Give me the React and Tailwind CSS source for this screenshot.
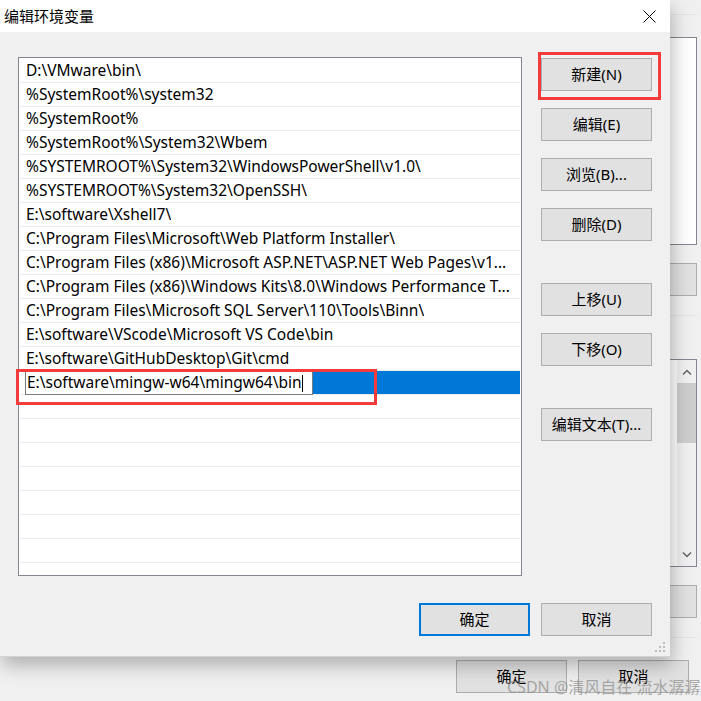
const paths = [
  'D:\\VMware\\bin\\',
  '%SystemRoot%\\system32',
  '%SystemRoot%',
  '%SystemRoot%\\System32\\Wbem',
  '%SYSTEMROOT%\\System32\\WindowsPowerShell\\v1.0\\',
  '%SYSTEMROOT%\\System32\\OpenSSH\\',
  'E:\\software\\Xshell7\\',
  'C:\\Program Files\\Microsoft\\Web Platform Installer\\',
  'C:\\Program Files (x86)\\Microsoft ASP.NET\\ASP.NET Web Pages\\v1...',
  'C:\\Program Files (x86)\\Windows Kits\\8.0\\Windows Performance T...',
  'C:\\Program Files\\Microsoft SQL Server\\110\\Tools\\Binn\\',
  'E:\\software\\VScode\\Microsoft VS Code\\bin',
  'E:\\software\\GitHubDesktop\\Git\\cmd',
]

const editing = 'E:\\software\\mingw-w64\\mingw64\\bin'

function Btn({ children, primary }) {
  return (
    <div
      className={`w-[111px] h-[33px] flex items-center justify-center bg-[#e1e1e1] text-[15px] text-black ${
        primary ? 'border-2 border-[#0078d7]' : 'border border-[#adadad]'
      }`}
    >
      {children}
    </div>
  )
}

const BgWindow = () => (
  <div className="absolute left-[300px] top-0 w-[401px] h-[701px] flex flex-col items-end pr-[4px]">
    <div className="w-full h-[15px] border-b border-[#e3e3e3]"></div>
    <div className="mt-[22px] w-[200px] h-[208px] border border-[#828790] bg-white"></div>
    <div className="mt-[18px] w-[100px] h-[33px] bg-[#e1e1e1] border border-[#adadad]"></div>
    <div className="mt-[19px] w-full border-t border-[#e3e3e3]"></div>
    <div className="mt-[43px] w-[200px] h-[208px] border border-[#828790] bg-white flex justify-end">
      <div className="w-[19px] bg-[#f0f0f0] flex flex-col items-center">
        <div className="h-[23px] flex items-center">
          <svg width="10" height="6" viewBox="0 0 10 6" fill="none" stroke="#606060" strokeWidth="1.4">
            <path d="M1 5.5L5 1.5L9 5.5" />
          </svg>
        </div>
        <div className="w-full h-[60px] bg-[#cdcdcd]"></div>
        <div className="flex-1"></div>
        <div className="h-[23px] flex items-center">
          <svg width="10" height="6" viewBox="0 0 10 6" fill="none" stroke="#606060" strokeWidth="1.4">
            <path d="M1 0.5L5 4.5L9 0.5" />
          </svg>
        </div>
      </div>
    </div>
    <div className="mt-[18px] w-[100px] h-[33px] bg-[#e1e1e1] border border-[#adadad]"></div>
    <div className="mt-[19px] w-full border-t border-[#e3e3e3]"></div>
    <div className="mt-[22px] flex gap-[11px] pr-[8px]">
      <Btn>确定</Btn>
      <Btn>取消</Btn>
    </div>
  </div>
)

export default function App() {
  const empty = Array.from({ length: 9 })

  return (
    <div className="relative w-[701px] h-[701px] overflow-hidden bg-[#f0f0f0] font-['Noto_Sans','Noto_Sans_CJK_SC',sans-serif]">
      <BgWindow />

      {/* dialog */}
      <div className="absolute left-0 top-0 w-[670px] h-[657px] bg-[#f0f0f0] border-b border-[#d4d4d4] shadow-[2px_8px_18px_rgba(0,0,0,0.28)] flex flex-col">
        <div className="h-[32px] bg-white flex items-center justify-between pl-[4px] pr-[14px]">
          <span className="text-[15px] text-black">编辑环境变量</span>
          <svg width="13" height="13" viewBox="0 0 13 13" stroke="#000" strokeWidth="1">
            <path d="M0.5 0.5L12.5 12.5M12.5 0.5L0.5 12.5" />
          </svg>
        </div>

        <div className="flex px-[18px] pt-[25px]">
          <div className="relative w-[504px] h-[519px] border border-[#828790] bg-white px-[1px] py-[1px]">
            <div className="h-full overflow-hidden">
              {paths.map(p => (
                <div key={p} className="h-[24px] border-b border-[#ebebeb] flex items-center pl-[6px] pr-[2px] pt-[1px] text-[15.5px] text-black">
                  <span className="whitespace-nowrap overflow-hidden">{p}</span>
                </div>
              ))}
              <div className="h-[24px] border-b border-[#ebebeb] flex">
                <div className="ml-[5px] w-[288px] h-[24px] border border-[#7a7a7a] bg-white flex items-center pl-[1px] text-[15.5px] text-black">
                  <span className="whitespace-nowrap">{editing}</span>
                  <span className="w-px h-[17px] bg-black"></span>
                </div>
                <div className="flex-1 h-[23px] bg-[#0078d7]"></div>
              </div>
              {empty.map((_, i) => (
                <div key={i} className="h-[24px] border-b border-[#ebebeb]"></div>
              ))}
            </div>
            <div className="absolute left-[-3px] top-[311px] w-[361px] h-[36px] border-[3px] border-[#f33b3b]"></div>
          </div>

          <div className="ml-[19px] pt-[1px] flex flex-col">
            <div className="relative">
              <Btn>新建(N)</Btn>
              <div className="absolute left-[-3px] top-[-6px] w-[123px] h-[48px] border-[3px] border-[#f33b3b]"></div>
            </div>
            <div className="mt-[17px]"><Btn>编辑(E)</Btn></div>
            <div className="mt-[17px]"><Btn>浏览(B)...</Btn></div>
            <div className="mt-[17px]"><Btn>删除(D)</Btn></div>
            <div className="mt-[42px]"><Btn>上移(U)</Btn></div>
            <div className="mt-[17px]"><Btn>下移(O)</Btn></div>
            <div className="mt-[42px]"><Btn>编辑文本(T)...</Btn></div>
          </div>
        </div>

        <div className="mt-[27px] flex justify-end gap-[11px] pr-[18px]">
          <Btn primary>确定</Btn>
          <Btn>取消</Btn>
        </div>

        <div className="flex-1 flex items-end justify-end pr-[3px] pb-[2px]">
          <svg width="12" height="12" viewBox="0 0 12 12" fill="#bcbcbc">
            <rect x="8" y="0" width="2" height="2" />
            <rect x="4" y="4" width="2" height="2" />
            <rect x="8" y="4" width="2" height="2" />
            <rect x="0" y="8" width="2" height="2" />
            <rect x="4" y="8" width="2" height="2" />
            <rect x="8" y="8" width="2" height="2" />
          </svg>
        </div>
      </div>

      <div className="absolute left-[507px] top-[675px] text-[16px] text-[#8a8a8a]/70 whitespace-nowrap">
        CSDN @清风自在 流水潺潺
      </div>
    </div>
  )
}
